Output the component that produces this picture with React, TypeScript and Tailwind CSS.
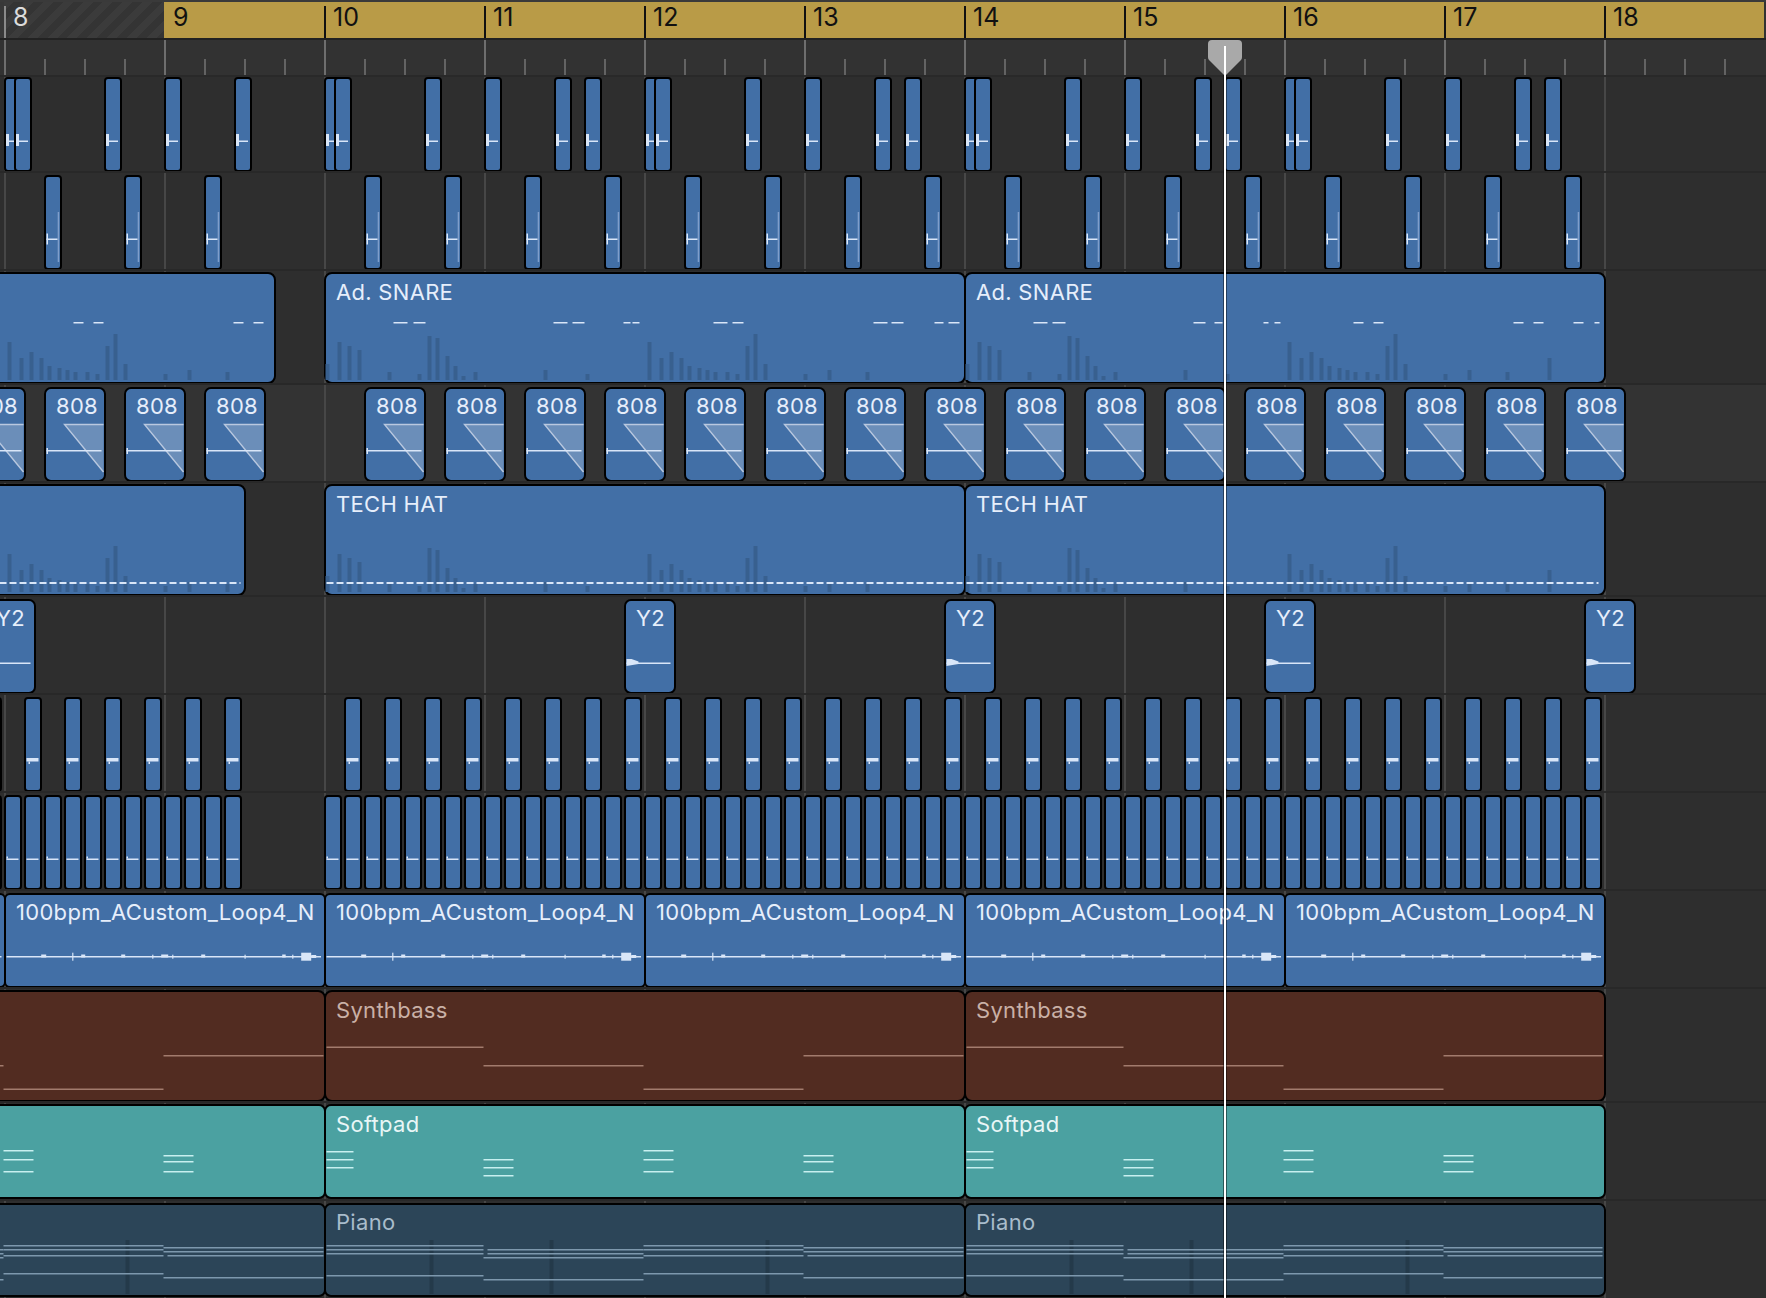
import React from 'react';

const barX = (b: number) => 5 + (b - 8) * 160;
const BARS = [8, 9, 10, 11, 12, 13, 14, 15, 16, 17, 18];
const range = (from: number, to: number, step = 1) => {
    const out: number[] = [];
    for (let i = from; i <= to; i += step) out.push(i);
    return out;
};

// region start positions per track
const kickX = [8, 10, 12, 14, 16].flatMap((b) =>
    (b === 8 ? [0, 10, 100, 160, 230] : [0, 10, 100, 160, 230, 260]).map((o) => barX(b) + o)
);
const offbeatX = range(0, 19).filter((k) => k !== 3).map((k) => 45 + 80 * k);
const eightX = [-35, ...offbeatX];
const y2X = [-15, 625, 945, 1265, 1585];
const clapX = [-15, ...range(0, 5).map((k) => 25 + 40 * k), ...range(0, 31).map((k) => 345 + 40 * k)];
const tickX = [-15, ...range(0, 11).map((k) => 5 + 20 * k), ...range(0, 63).map((k) => 325 + 20 * k)];
const loopX = [5, 325, 645, 965, 1285];

const SPECTRUM_A = [[3, 38], [15, 22], [25, 28], [35, 22], [43, 14], [53, 12], [61, 10], [69, 8], [81, 8], [91, 6], [101, 34], [109, 46], [119, 16], [159, 6], [183, 10], [221, 8]];
const SPECTRUM_B = [[1, 16], [13, 38], [23, 34], [33, 30], [63, 8], [93, 6], [103, 44], [111, 42], [121, 24], [129, 14], [137, 4], [149, 8], [219, 10], [261, 6]];
const spectrum = [8, 10, 12, 14, 16].flatMap((b) =>
    (b % 4 === 0 ? SPECTRUM_A : SPECTRUM_B).map(([o, h]) => [barX(b) + o, h])
).concat([[1548, 22]]);

const SNARE_DASHES = [
    [74, 84], [94, 104], [234, 244], [254, 264], [394, 408], [414, 426], [554, 568], [573, 585], [624, 631], [633, 640],
    [714, 728], [733, 744], [874, 888], [892, 904], [935, 944], [949, 960], [1034, 1048], [1053, 1066], [1194, 1206], [1215, 1223],
    [1264, 1269], [1275, 1281], [1354, 1364], [1374, 1384], [1514, 1524], [1534, 1544], [1574, 1584], [1595, 1600],
];

const LOOP_BUMPS = [[36.7, 5], [76.7, 4], [116.7, 4], [156.7, 7], [196.7, 4], [277.7, 3.5]];
const LOOP_TICKS = [[67.7, 8], [147.7, 4], [167.7, 4], [240, 4], [287.7, 4]];

const SYNTH_Y = [1088.5, 1055, 1046.5, 1065];
const PAD_Y = [[1150, 1159, 1171], [1155, 1161, 1171], [1151, 1159, 1167], [1159, 1167, 1175]];
const PIANO_Y = [[1245, 1249, 1255, 1273], [1247, 1251, 1255, 1277], [1245, 1249, 1253, 1275], [1249, 1253, 1257, 1279]];
const PIANO_DARK = [126, 430, 550, 766, 1070, 1190, 1406];

const LIGHT = '#d9e6f8';

// note segments stop a pixel short of the bar line, region starts sit just inside the border
const segStart = (b: number) => barX(b) + (b === 10 || b === 14 ? 2 : -1);
const segEnd = (b: number) => (b === 17 ? 1603 : barX(b + 1) - 1);

const BarLines = () => (
    <div className="absolute inset-0 flex pl-[5px]">
        {BARS.map((b) => (
            <div key={b} className="h-full w-[160px] shrink-0 border-l-2 border-[#474747]" />
        ))}
    </div>
);

const Row = ({ h, className, children }: { h: string; className?: string; children?: React.ReactNode }) => (
    <div className={`relative box-border shrink-0 overflow-hidden border-b-2 border-[#282828] ${h} ${className ?? ''}`}>
        <BarLines />
        {children}
    </div>
);

const Region = ({ x, w, className, label }: { x: number; w: number; className: string; label?: string }) => (
    <div
        className={`absolute box-border overflow-hidden whitespace-nowrap border-2 border-black pl-[10px] text-[22px] leading-[28px] tracking-[0.3px] ${className}`}
        style={{ left: x, width: w }}
    >
        {label}
    </div>
);

// marks are drawn in page coordinates, the viewBox shifts them into the row
const Marks = ({ top, height, children }: { top: number; height: number; children: React.ReactNode }) => (
    <svg className="absolute inset-x-0 top-0" width={1766} height={height} viewBox={`-0.5 ${top} 1766 ${height}`}>
        {children}
    </svg>
);

const Ruler = () => (
    <div className="flex h-[77px] shrink-0 flex-col bg-[#323232]">
        <div className="h-[2px] bg-[#3a3a3a]" />
        <div className="flex h-[36px]">
            <div className="h-full w-[5px] shrink-0 bg-[#383838]" />
            {BARS.map((b) => (
                <div
                    key={b}
                    className={`flex h-full w-[160px] shrink-0 ${b === 8 ? 'bg-[repeating-linear-gradient(135deg,#3b3b3b_0,#3b3b3b_7px,#343434_7px,#343434_14px)] text-[#dcdcdc]' : 'bg-[#b99b47] text-[#111111]'}`}
                >
                    <div className={`mt-[4px] h-[32px] w-[2px] ${b === 8 ? 'bg-[#8a8a8a]' : b === 9 ? 'bg-transparent' : 'bg-[#111111]'}`} />
                    <span className="pl-[7px] text-[25px] leading-[31px]">{b}</span>
                </div>
            ))}
        </div>
        <div className="h-[2px] bg-[#222222]" />
        <div className="flex min-h-0 flex-1 border-b-2 border-[#292929] pl-[5px]">
            {BARS.map((b) => (
                <div key={b} className="flex h-full w-[160px] shrink-0">
                    {[0, 1, 2, 3].map((beat) => (
                        <div key={beat} className="flex h-full w-[40px] shrink-0 items-end">
                            <div className={`w-[2px] ${beat === 0 ? 'h-full bg-[#6e6e6e]' : 'h-[16px] bg-[#636363]'}`} />
                        </div>
                    ))}
                </div>
            ))}
        </div>
    </div>
);

const Playhead = () => (
    <>
        <div className="absolute bottom-0 left-[1225px] top-[46px] w-[2px] bg-white shadow-[0_0_0_1px_rgba(0,0,0,0.45)]" />
        <svg className="absolute left-[1209px] top-[40px]" width={34} height={36} viewBox="0 0 34 36">
            <path d="M4 0H30Q34 0 34 4V17Q34 19 33 20L18 35H16L1 20Q0 19 0 17V4Q0 0 4 0Z" fill="#a9a9a9" />
            <rect x={16} y={6} width={2} height={30} fill="#ffffff" />
        </svg>
    </>
);

const BLUE = 'bg-[#426fa6]';
const NARROW = `${BLUE} rounded-[4px]`;
const SHORT = 'top-[2px] h-[95px] pt-[2.5px]';
const TALL = 'top-[1px] h-[112px] pt-[3.5px] rounded-[8px]';
const BLUE_TEXT = 'text-[#e6eefb]';

export default function App() {
    return (
        <div className="h-[1298px] w-[1766px] overflow-hidden">
            {/* the whole timeline sits a pixel left of the window edge */}
            <div className="relative -ml-px flex h-[1298px] w-[1767px] flex-col overflow-hidden bg-[#2e2e2e] font-['Inter',sans-serif]">
                <Ruler />

                <Row h="h-[96px]">
                    {kickX.map((x) => (
                        <Region key={x} x={x} w={18} className={`${NARROW} top-0 h-[95px]`} />
                    ))}
                    <Marks top={77} height={96}>
                        {kickX.map((x) => {
                            const covered = kickX.includes(x + 10);
                            return (
                                <g key={x} fill={LIGHT}>
                                    <rect x={x + 1.5} y={134} width={3} height={12} />
                                    <rect x={x + 1.5} y={140.5} width={covered ? 8 : 12} height={1.5} />
                                </g>
                            );
                        })}
                    </Marks>
                </Row>

                <Row h="h-[98px]">
                    {offbeatX.map((x) => (
                        <Region key={x} x={x} w={18} className={`${NARROW} ${SHORT}`} />
                    ))}
                    <Marks top={173} height={98}>
                        {offbeatX.map((x) => (
                            <g key={x}>
                                <rect x={x + 13.2} y={212} width={1.5} height={50} fill="#7f9ecb" />
                                <rect x={x + 2} y={233.5} width={1.5} height={11} fill={LIGHT} />
                                <rect x={x + 2} y={238.5} width={11} height={1.5} fill={LIGHT} />
                            </g>
                        ))}
                    </Marks>
                </Row>

                <Row h="h-[114px]">
                    <Region x={-315} w={592} className={`${BLUE} ${TALL}`} />
                    <Region x={325} w={642} className={`${BLUE} ${TALL} ${BLUE_TEXT}`} label="Ad. SNARE" />
                    <Region x={965} w={642} className={`${BLUE} ${TALL} ${BLUE_TEXT}`} label="Ad. SNARE" />
                    <Marks top={271} height={114}>
                        {spectrum.map(([x, h]) => (
                            <rect key={x} x={x} y={380 - h} width={4} height={h} fill="#38608f" />
                        ))}
                        {SNARE_DASHES.map(([a, b]) => (
                            <rect key={a} x={a} y={322} width={b - a} height={1.5} fill={LIGHT} />
                        ))}
                    </Marks>
                </Row>

                <Row h="h-[98px]" className="bg-[#333333]">
                    {eightX.map((x) => (
                        <Region key={x} x={x} w={62} className={`${BLUE} ${SHORT} rounded-[7px] ${BLUE_TEXT}`} label="808" />
                    ))}
                    <Marks top={385} height={98}>
                        {eightX.map((x) => (
                            <g key={x}>
                                <polygon points={`${x + 20},424 ${x + 59},424 ${x + 59},472`} fill="#ffffff" fillOpacity={0.22} />
                                <path d={`M${x + 59} 424.5H${x + 20}L${x + 59} 472`} fill="none" stroke="#b9c8df" strokeWidth={1.4} />
                                <rect x={x + 2} y={450} width={55} height={1.5} fill={LIGHT} />
                                <rect x={x + 2} y={448} width={1.5} height={6} fill={LIGHT} />
                            </g>
                        ))}
                    </Marks>
                </Row>

                <Row h="h-[114px]">
                    <Region x={-315} w={562} className={`${BLUE} ${TALL}`} />
                    <Region x={325} w={642} className={`${BLUE} ${TALL} ${BLUE_TEXT}`} label="TECH HAT" />
                    <Region x={965} w={642} className={`${BLUE} ${TALL} ${BLUE_TEXT}`} label="TECH HAT" />
                    <Marks top={483} height={114}>
                        {spectrum.map(([x, h]) => (
                            <rect key={x} x={x} y={592 - h} width={4} height={h} fill="#38608f" />
                        ))}
                        {[[0, 241], [327, 963], [967, 1599]].map(([a, b]) => (
                            <line key={a} x1={a} x2={b} y1={583} y2={583} stroke={LIGHT} strokeWidth={2} strokeDasharray="7 3" />
                        ))}
                    </Marks>
                </Row>

                <Row h="h-[98px]">
                    {y2X.map((x) => (
                        <Region key={x} x={x} w={52} className={`${BLUE} ${SHORT} rounded-[7px] ${BLUE_TEXT}`} label="Y2" />
                    ))}
                    <Marks top={597} height={98}>
                        {y2X.map((x) => (
                            <g key={x} fill={LIGHT}>
                                <rect x={x + 2} y={662.5} width={44} height={1.5} />
                                <polygon points={`${x + 2},659 ${x + 7},659 ${x + 14},661.5 ${x + 14},664 ${x + 2},666`} />
                            </g>
                        ))}
                    </Marks>
                </Row>

                <Row h="h-[98px]">
                    {clapX.map((x) => (
                        <Region key={x} x={x} w={18} className={`${NARROW} ${SHORT}`} />
                    ))}
                    <Marks top={695} height={98}>
                        {clapX.map((x) => (
                            <g key={x} fill={LIGHT}>
                                <rect x={x + 2} y={758} width={12} height={3.5} />
                                <rect x={x + 4} y={761.5} width={1.5} height={2.5} />
                            </g>
                        ))}
                    </Marks>
                </Row>

                <Row h="h-[98px]">
                    {tickX.map((x) => (
                        <Region key={x} x={x} w={18} className={`${NARROW} ${SHORT}`} />
                    ))}
                    <Marks top={793} height={98}>
                        {tickX.map((x) => (
                            <g key={x} fill={LIGHT}>
                                <rect x={x + 2} y={858.5} width={12} height={1.5} />
                                {(x - 5) % 40 === 0 && <rect x={x + 2} y={856.5} width={1.5} height={2} />}
                            </g>
                        ))}
                    </Marks>
                </Row>

                <Row h="h-[98px]">
                    <Region x={-315} w={322} className={`${BLUE} ${SHORT} rounded-[6px]`} />
                    {loopX.map((x) => (
                        <Region key={x} x={x} w={322} className={`${BLUE} ${SHORT} rounded-[6px] ${BLUE_TEXT}`} label="100bpm_ACustom_Loop4_N" />
                    ))}
                    <Marks top={891} height={98}>
                        {loopX.map((x) => (
                            <g key={x} fill={LIGHT}>
                                <rect x={x + 2} y={956} width={314.5} height={1.5} />
                                {LOOP_BUMPS.map(([o, w]) => (
                                    <rect key={o} x={x + o} y={954.5} width={w} height={3} />
                                ))}
                                {LOOP_TICKS.map(([o, h]) => (
                                    <rect key={o} x={x + o} y={956.7 - h / 2} width={1.2} height={h} />
                                ))}
                                <rect x={x + 296.7} y={952.7} width={10} height={8} />
                                <rect x={x + 306.7} y={955} width={5} height={3} />
                            </g>
                        ))}
                        <rect x={0} y={956} width={2} height={1.5} fill={LIGHT} />
                    </Marks>
                </Row>

                <Row h="h-[114px]">
                    <Region x={-315} w={642} className={`${TALL} bg-[#522c21]`} />
                    <Region x={325} w={642} className={`${TALL} bg-[#522c21] text-[#c9b0a6]`} label="Synthbass" />
                    <Region x={965} w={642} className={`${TALL} bg-[#522c21] text-[#c9b0a6]`} label="Synthbass" />
                    <Marks top={989} height={114}>
                        {range(7, 17).map((b) => (
                            <rect key={b} x={segStart(b)} y={SYNTH_Y[(b + 4 - 8) % 4]} width={segEnd(b) - segStart(b)} height={1.5} fill="#a27b6d" />
                        ))}
                    </Marks>
                </Row>

                <Row h="h-[98px]">
                    <Region x={-315} w={642} className="top-[1px] h-[95px] rounded-[7px] bg-[#4ba1a1] pt-[3.5px]" />
                    <Region x={325} w={642} className="top-[1px] h-[95px] rounded-[7px] bg-[#4ba1a1] pt-[3.5px] text-[#e8f6f6]" label="Softpad" />
                    <Region x={965} w={642} className="top-[1px] h-[95px] rounded-[7px] bg-[#4ba1a1] pt-[3.5px] text-[#e8f6f6]" label="Softpad" />
                    <Marks top={1103} height={98}>
                        {range(8, 17).map((b) =>
                            PAD_Y[(b - 8) % 4].map((y) => (
                                <rect key={`${b}-${y}`} x={segStart(b)} y={y} width={barX(b) + 29 - segStart(b)} height={1.5} fill="#c8f0f0" />
                            ))
                        )}
                    </Marks>
                </Row>

                <Row h="h-[97px]" className="!border-b-0">
                    <Region x={-315} w={642} className="top-[2px] h-[94px] rounded-[7px] bg-[#2c4558] pt-[2.5px]" />
                    <Region x={325} w={642} className="top-[2px] h-[94px] rounded-[7px] bg-[#2c4558] pt-[2.5px] text-[#a9bccb]" label="Piano" />
                    <Region x={965} w={642} className="top-[2px] h-[94px] rounded-[7px] bg-[#2c4558] pt-[2.5px] text-[#a9bccb]" label="Piano" />
                    <Marks top={1201} height={97}>
                        {PIANO_DARK.map((x) => (
                            <rect key={x} x={x} y={1240} width={4} height={54} fill="#243a4a" />
                        ))}
                        {range(7, 17).map((b) =>
                            PIANO_Y[(b + 4 - 8) % 4].map((y, i) => {
                                const inset = (b % 4 === 3 && i < 2) || (b % 4 === 1 && i === 2) ? 4 : 0;
                                return (
                                    <rect key={`${b}-${i}`} x={segStart(b) + inset} y={y} width={segEnd(b) - segStart(b) - inset} height={1.5} fill="#7d98ad" />
                                );
                            })
                        )}
                    </Marks>
                </Row>

                <Playhead />
            </div>
        </div>
    );
}
